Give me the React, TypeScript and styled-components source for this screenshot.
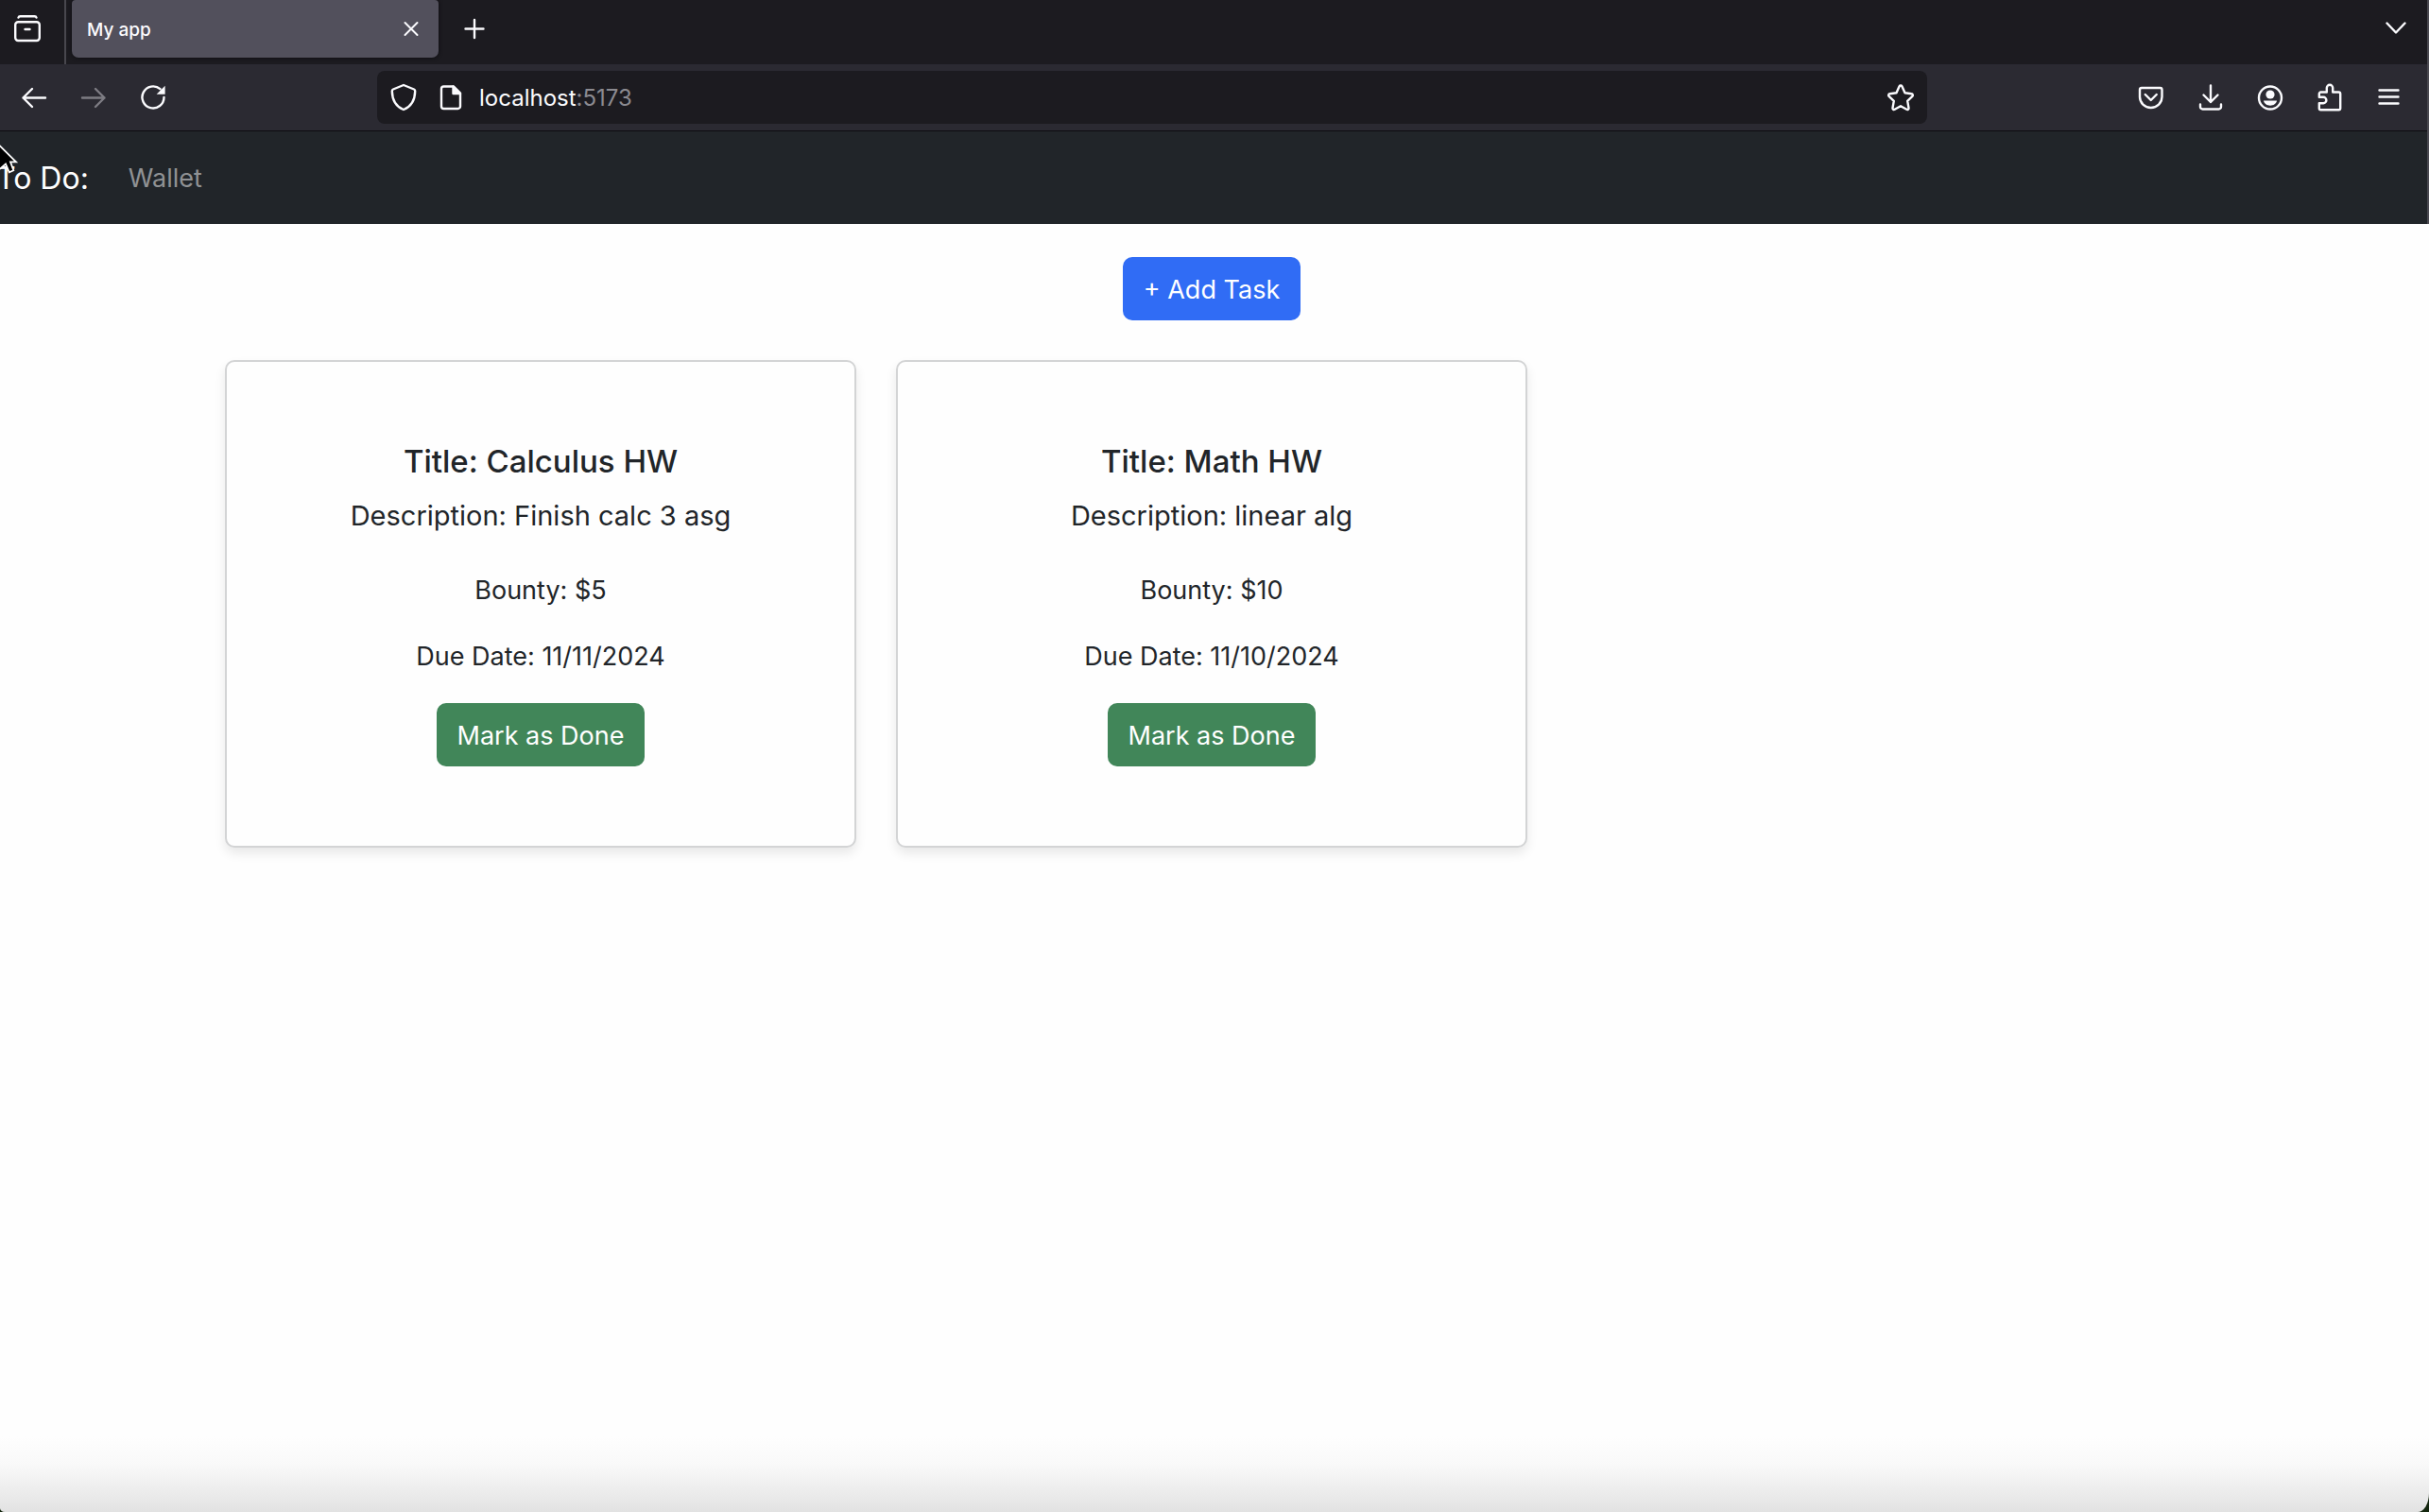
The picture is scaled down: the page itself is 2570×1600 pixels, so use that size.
import React from "react";
import styled, { createGlobalStyle } from "styled-components";

const GlobalStyle = createGlobalStyle`
  *, *::before, *::after { box-sizing: border-box; }
  body { margin: 0; background: #14270f; font-family: Inter, "Liberation Sans", sans-serif; color: #212529; }
  h2, h3, p { margin: 0; }
  button { font-family: inherit; cursor: pointer; }
`;

const Window = styled.div`
  position: relative;
  display: flex;
  flex-direction: column;
  min-height: 100vh;
  overflow: hidden;
  border-radius: 0 0 12px 5px / 0 0 20px 4px;
  background: linear-gradient(to top, #e2e2e2 0, #efefef 28px, #f9f9f9 50px, #fefefe 80px);
`;

const Chrome = styled.div`
  border-right: 2px solid #4a4950;
`;

const TabStrip = styled.div`
  display: flex;
  height: 68px;
  background: #1c1b20;
`;

const IconButton = styled.button<{ $width?: number; $dim?: boolean }>`
  display: flex;
  align-items: center;
  justify-content: center;
  flex: none;
  width: ${(p) => p.$width ?? 63}px;
  padding: 0;
  border: 0;
  background: none;
  color: ${(p) => (p.$dim ? "#7d7c83" : "#fbfbfe")};
`;

const SidebarSlot = styled.div`
  display: flex;
  width: 70px;
  height: 68px;
  padding-bottom: 8px;
  border-right: 2px solid #48474e;
`;

const Tab = styled.div`
  display: flex;
  align-items: center;
  justify-content: space-between;
  width: 388px;
  height: 61px;
  margin: 0 6px;
  padding: 0 8px 0 16px;
  border-radius: 4px 4px 7px 7px;
  background: #52505c;
  box-shadow: 0 0 4px #0c0b10;
`;

const TabTitle = styled.span`
  padding-top: 2px;
  font-size: 19px;
  line-height: 24px;
  font-weight: 500;
  color: #fbfbfe;
`;

const TabActions = styled.div`
  display: flex;
  flex: 1;
  justify-content: space-between;
  height: 60px;
  padding-right: 2px;
`;

const Toolbar = styled.div`
  display: flex;
  align-items: center;
  height: 71px;
  border-bottom: 1px solid #0c0c10;
  background: #2b2a32;
`;

const ToolGroup = styled.div<{ $end?: boolean }>`
  display: flex;
  width: ${(p) => (p.$end ? 529 : 399)}px;
  padding: ${(p) => (p.$end ? "0 9px 0 0" : "0 0 0 4px")};
  justify-content: ${(p) => (p.$end ? "flex-end" : "flex-start")};
`;

const AddressBar = styled.div`
  display: flex;
  flex: 1;
  align-items: center;
  height: 56px;
  padding-left: 3px;
  border-radius: 8px;
  background: #1c1b20;
`;

const Address = styled.div`
  flex: 1;
  padding: 2px 0 0 5px;
  font-size: 24px;
  line-height: 30px;
  color: #8b8a90;
`;

const Host = styled.span`
  color: #fbfbfe;
`;

const NavBar = styled.nav`
  display: flex;
  align-items: center;
  height: 98px;
  gap: 42px;
  padding-top: 2px;
  background: #212529;
`;

const Brand = styled.a`
  margin-left: -4px;
  font-size: 32px;
  line-height: 50px;
  color: #fff;
  text-decoration: none;
`;

const NavLink = styled.a`
  font-size: 27px;
  line-height: 42px;
  color: #909294;
  text-decoration: none;
`;

const Main = styled.main`
  display: flex;
  flex-direction: column;
  align-items: center;
  gap: 42px;
  padding: 35px 6px 42px 0;
`;

const Button = styled.button<{ $tone: "primary" | "success" }>`
  padding: 13px 22px 11px;
  border: 0;
  border-radius: 10px;
  font-size: 27px;
  line-height: 43px;
  color: #fff;
  background: ${(p) => (p.$tone === "primary" ? "#306cf5" : "#418659")};
`;

const TaskGrid = styled.div`
  display: grid;
  grid-template-columns: repeat(3, 1fr);
  gap: 42px;
  width: 100%;
  max-width: 2088px;
`;

const Card = styled.article`
  display: flex;
  flex-direction: column;
  align-items: center;
  padding: 84px 28px;
  border: 2px solid #d3d4d5;
  border-radius: 10px;
  background: #fefefe;
  box-shadow: 0 6px 12px rgba(0, 0, 0, 0.09);
`;

const TaskTitle = styled.h2`
  margin-bottom: 14px;
  font-size: 33px;
  line-height: 42px;
  font-weight: 500;
`;

const Description = styled.h3`
  margin-bottom: 35px;
  font-size: 29px;
  line-height: 46px;
  font-weight: 400;
`;

const Detail = styled.p`
  margin-bottom: 28px;
  font-size: 27px;
  line-height: 42px;
`;

const Cursor = styled.svg`
  position: absolute;
  top: 150px;
  left: 0;
`;

const Glyph = ({ children, size = 32, weight = 2.4 }: { children: React.ReactNode; size?: number; weight?: number }) => (
  <svg width={size} height={size} viewBox="0 0 32 32" fill="none" stroke="currentColor" strokeWidth={weight} strokeLinecap="round" strokeLinejoin="round" aria-hidden="true">
    {children}
  </svg>
);

const tasks = [
  { title: "Calculus HW", description: "Finish calc 3 asg", bounty: 5, due: "11/11/2024" },
  { title: "Math HW", description: "linear alg", bounty: 10, due: "11/10/2024" },
];

export default function App() {
  return (
    <Window>
      <GlobalStyle />
      <Chrome>
        <TabStrip>
          <SidebarSlot>
            <IconButton $width={58} aria-label="Recent browsing">
              <Glyph>
                <path d="M6.500 4.500C6.800 3.400 7.600 3.200 8.500 3.200h15c.9 0 1.700.2 2 1.300" />
                <rect x="3.200" y="9.200" width="25.600" height="19.800" rx="3" />
                <path d="M13.500 17h5" />
              </Glyph>
            </IconButton>
          </SidebarSlot>
          <Tab>
            <TabTitle>My app</TabTitle>
            <IconButton $width={42} aria-label="Close tab">
              <Glyph weight={2}><path d="M9.500 9l13 13M22.500 9l-13 13" /></Glyph>
            </IconButton>
          </Tab>
          <TabActions>
            <IconButton aria-label="New tab"><Glyph><path d="M16 7v19M6.500 16.500h19" /></Glyph></IconButton>
            <IconButton aria-label="List all tabs"><Glyph><path d="M6.500 10.500l9.500 10 9.500-10" /></Glyph></IconButton>
          </TabActions>
        </TabStrip>
        <Toolbar>
          <ToolGroup>
            <IconButton aria-label="Back"><Glyph><path d="M28 16.500H4.500M14 7l-9.500 9.500 9.500 9.500" /></Glyph></IconButton>
            <IconButton $dim aria-label="Forward"><Glyph><path d="M4 16.500h23.500M18 7l9.500 9.500-9.500 9.500" /></Glyph></IconButton>
            <IconButton aria-label="Reload">
              <Glyph>
                <path d="M23.500 7.200A11.500 11.500 0 1 0 27.500 16" />
                <path d="M28.600 3.800v9h-9z" fill="currentColor" stroke="none" />
              </Glyph>
            </IconButton>
          </ToolGroup>
          <AddressBar>
            <IconButton $width={50} aria-label="Tracking protection">
              <Glyph><path d="M16 3L27 7.500q1.300.6 1.200 2C28 19.500 23.500 26 16 29 8.500 26 4 19.500 3.800 9.500q-.1-1.400 1.200-2z" /></Glyph>
            </IconButton>
            <IconButton $width={50} aria-label="Site information">
              <Glyph>
                <path d="M8.500 4.500H19l7 7v14a2.500 2.500 0 0 1-2.500 2.500h-15A2.500 2.500 0 0 1 6 25.500V7a2.500 2.500 0 0 1 2.500-2.500z" />
                <path d="M18.500 4.500v7.500H26z" fill="currentColor" />
              </Glyph>
            </IconButton>
            <Address><Host>localhost</Host>:5173</Address>
            <IconButton $width={56} aria-label="Bookmark this page">
              <Glyph>
                <path d="M14.600 4.300a1.600 1.600 0 0 1 2.800 0l3.100 7 7 1a1.500 1.500 0 0 1 .9 2.600l-5.200 5 1.300 7.300a1.500 1.500 0 0 1-2.200 1.600L16 25.200l-6.300 3.600a1.500 1.500 0 0 1-2.200-1.600l1.300-7.300-5.200-5a1.500 1.500 0 0 1 .9-2.600l7-1z" />
              </Glyph>
            </IconButton>
          </AddressBar>
          <ToolGroup $end>
            <IconButton aria-label="Save to Pocket">
              <Glyph>
                <path d="M6 6h19.500a2 2 0 0 1 2 2V15.500a11.750 11.500 0 0 1-23.500 0V8a2 2 0 0 1 2-2z" />
                <path d="M9.750 13l6 6 6-6" />
              </Glyph>
            </IconButton>
            <IconButton aria-label="Downloads">
              <Glyph><path d="M16 3.500v17.500M8.500 13.500L16 21l7.500-7.500M5 23.500V26a2.500 2.500 0 0 0 2.500 2.500h17A2.500 2.500 0 0 0 27 26v-2.500" /></Glyph>
            </IconButton>
            <IconButton aria-label="Account">
              <Glyph>
                <circle cx="16" cy="16.500" r="12" />
                <circle cx="16" cy="13" r="4.600" fill="currentColor" stroke="none" />
                <path d="M9 19.500h14c-.6 3.300-3.500 5.200-7 5.200s-6.400-1.900-7-5.200z" fill="currentColor" stroke="none" />
              </Glyph>
            </IconButton>
            <IconButton aria-label="Extensions">
              <Glyph>
                <path d="M6.500 10.500h6.300V6a3.200 3.200 0 0 1 6.400 0v4.500h6.300a1.700 1.700 0 0 1 1.700 1.700v15.300a1.700 1.700 0 0 1-1.700 1.700h-19a1.700 1.700 0 0 1-1.700-1.700v-5.300h4.400a3.200 3.200 0 0 0 0-6.400H4.800v-3.600a1.700 1.700 0 0 1 1.700-1.700z" />
              </Glyph>
            </IconButton>
            <IconButton aria-label="Menu"><Glyph><path d="M5.500 8.500h20M5.500 15.500h20M5.500 22.500h20" /></Glyph></IconButton>
          </ToolGroup>
        </Toolbar>
        <NavBar>
          <Brand href="#todo">To Do:</Brand>
          <NavLink href="#wallet">Wallet</NavLink>
        </NavBar>
      </Chrome>
      <Main>
        <Button $tone="primary">+ Add Task</Button>
        <TaskGrid>
          {tasks.map((task) => (
            <Card key={task.title}>
              <TaskTitle>Title: {task.title}</TaskTitle>
              <Description>Description: {task.description}</Description>
              <Detail>Bounty: ${task.bounty}</Detail>
              <Detail>Due Date: {task.due}</Detail>
              <Button $tone="success">Mark as Done</Button>
            </Card>
          ))}
        </TaskGrid>
      </Main>
      <Cursor width="20" height="36" viewBox="0 0 20 36" aria-hidden="true">
        <path d="M-1 3.500L17 21.300h-6l3.300 9-4.500 2-3.800-8.800-7 6z" fill="#000" stroke="#fff" strokeWidth="1.800" />
      </Cursor>
    </Window>
  );
}
